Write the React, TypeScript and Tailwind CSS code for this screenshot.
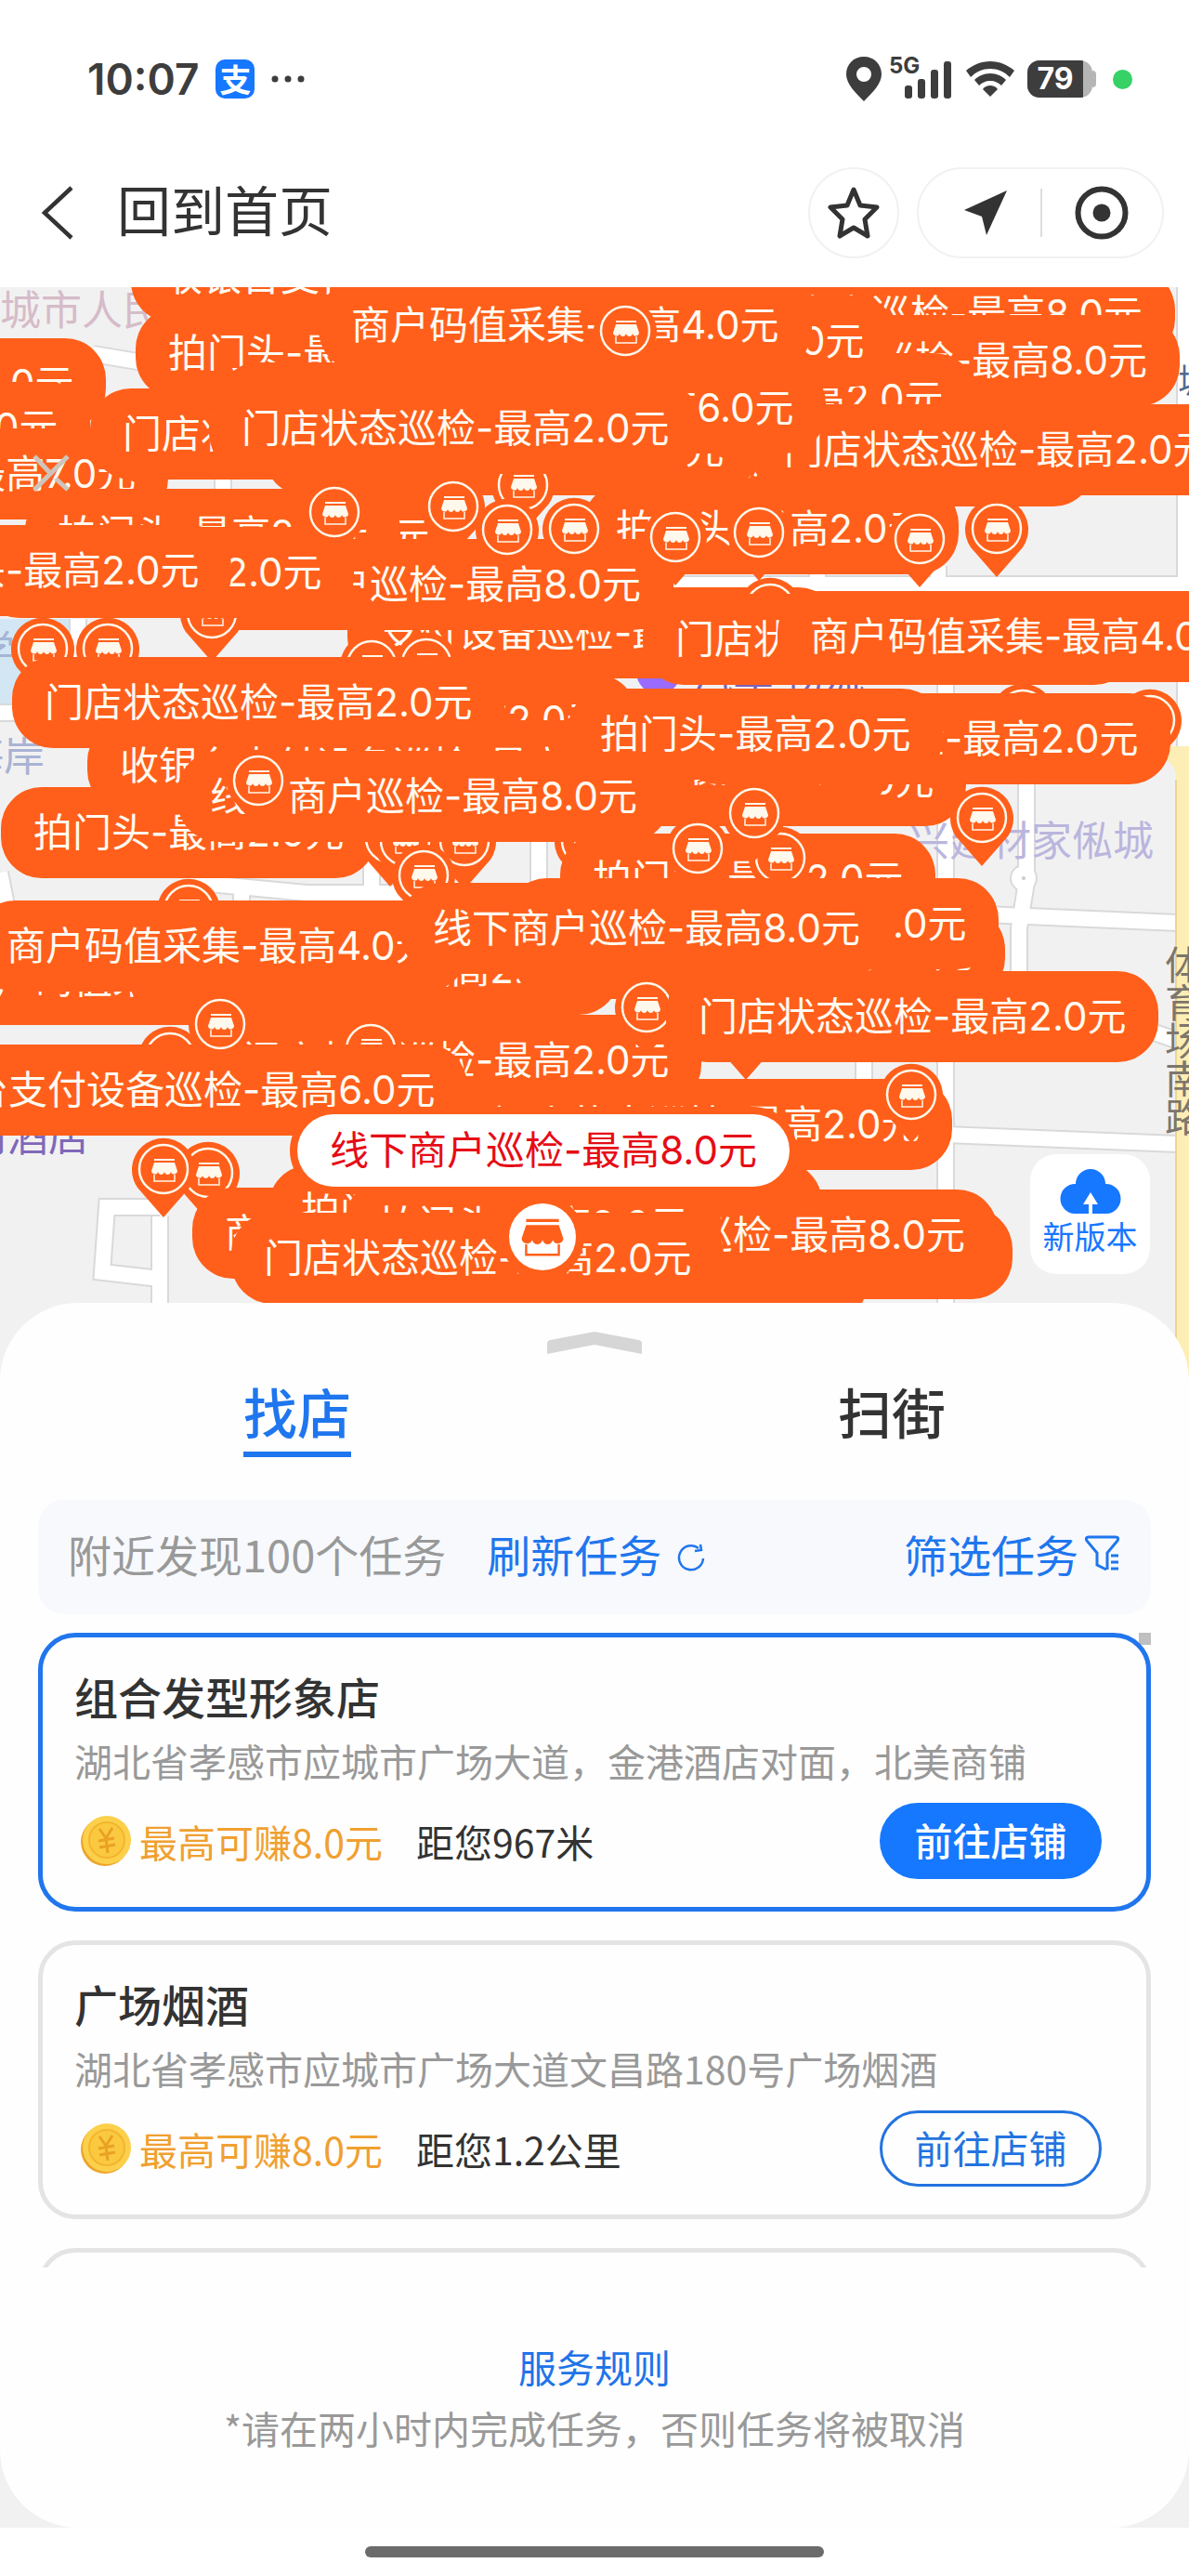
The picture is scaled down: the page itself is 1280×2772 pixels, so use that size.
import React, { useState } from "react";

const INSPECT = "门店状态巡检-最高2.0元";
const OFFLINE = "线下商户巡检-最高8.0元";
const COLLECT = "商户码值采集-最高4.0元";
const FACADE = "拍门头-最高2.0元";
const CASHIER = "收银台支付设备巡检-最高6.0元";
const DEVICE = "支付设备巡检-最高6.0元";

type Marker = { x: number; y: number; text?: string };

// Canvas coordinates: labels use their left edge and middle, pins use the middle of the ring.
// Later entries are drawn over earlier ones.
const markers: Marker[] = [
  { x: 141, y: -11, text: CASHIER },
  { x: 146, y: 71, text: FACADE },
  { x: -416, y: 104, text: INSPECT },
  { x: -433, y: 151, text: INSPECT },
  { x: 735, y: 29, text: OFFLINE },
  { x: 740, y: 79, text: OFFLINE },
  { x: 520, y: 120, text: INSPECT },
  { x: 435, y: 58, text: INSPECT },
  { x: 343, y: 41, text: COLLECT },
  { x: 673, y: 47 },
  { x: 648, y: 187, text: INSPECT },
  { x: 284, y: 175, text: INSPECT },
  { x: 809, y: 175, text: INSPECT },
  { x: 628, y: 260, text: FACADE },
  { x: 234, y: 130, text: CASHIER },
  { x: -342, y: 201, text: "线下商户巡检-最高7.0元" },
  { x: 97, y: 158, text: INSPECT },
  { x: 93, y: 268, text: FACADE },
  { x: 563, y: 213 },
  { x: 225, y: 152, text: INSPECT },
  { x: 27, y: 266, text: FACADE },
  { x: 374, y: 372, text: DEVICE },
  { x: 195, y: 320, text: OFFLINE },
  { x: 228, y: 351 },
  { x: -23, y: 307, text: FACADE },
  { x: -155, y: 305, text: FACADE },
  { x: 360, y: 242 },
  { x: 488, y: 236 },
  { x: 546, y: 261 },
  { x: 618, y: 260 },
  { x: 727, y: 269 },
  { x: 817, y: 264 },
  { x: 990, y: 271 },
  { x: 1073, y: 260 },
  { x: 829, y: 346 },
  { x: 692, y: 379, text: INSPECT },
  { x: 837, y: 376, text: COLLECT },
  { x: 46, y: 389 },
  { x: 116, y: 389 },
  { x: 400, y: 407 },
  { x: 459, y: 405 },
  { x: 282, y: 466, text: FACADE },
  { x: 13, y: 447, text: INSPECT },
  { x: 510, y: 531, text: INSPECT },
  { x: 425, y: 517, text: INSPECT },
  { x: 94, y: 515, text: CASHIER },
  { x: 1, y: 587, text: FACADE },
  { x: 420, y: 593 },
  { x: 500, y: 596 },
  { x: 436, y: 596 },
  { x: 631, y: 596 },
  { x: 191, y: 548, text: OFFLINE },
  { x: 278, y: 531 },
  { x: 1101, y: 460 },
  { x: 1238, y: 466 },
  { x: 730, y: 486, text: INSPECT },
  { x: 611, y: 481, text: FACADE },
  { x: 603, y: 637, text: FACADE },
  { x: 840, y: 614 },
  { x: 751, y: 604 },
  { x: 812, y: 566 },
  { x: 1057, y: 571 },
  { x: 456, y: 633 },
  { x: 203, y: 670 },
  { x: -82, y: 745, text: COLLECT },
  { x: 137, y: 734, text: INSPECT },
  { x: 552, y: 717, text: OFFLINE },
  { x: 545, y: 685, text: INSPECT },
  { x: -28, y: 709, text: COLLECT },
  { x: 431, y: 690, text: OFFLINE },
  { x: 225, y: 832, text: INSPECT },
  { x: 183, y: 829 },
  { x: 399, y: 820 },
  { x: -152, y: 864, text: CASHIER },
  { x: 237, y: 793 },
  { x: 696, y: 775 },
  { x: 803, y: 801 },
  { x: 495, y: 901, text: INSPECT },
  { x: 717, y: 785, text: INSPECT },
  { x: 981, y: 869 },
  { x: 224, y: 953 },
  { x: 176, y: 949 },
  { x: 207, y: 1018, text: COLLECT },
  { x: 355, y: 990, text: OFFLINE },
  { x: 404, y: 1066, text: OFFLINE },
  { x: 560, y: 1040, text: OFFLINE },
  { x: 544, y: 1020, text: OFFLINE },
  { x: 289, y: 994, text: FACADE },
  { x: 372, y: 1009, text: FACADE },
  { x: 249, y: 1045, text: INSPECT },
];

const shops = [
  {
    name: "组合发型形象店",
    address: "湖北省孝感市应城市广场大道，金港酒店对面，北美商铺",
    reward: "最高可赚8.0元",
    distance: "距您967米",
  },
  {
    name: "广场烟酒",
    address: "湖北省孝感市应城市广场大道文昌路180号广场烟酒",
    reward: "最高可赚8.0元",
    distance: "距您1.2公里",
  },
];

const StoreGlyph = () => (
  <>
    <path d="M-11 -12H11V-10H-11Z" fill="currentColor" />
    <path
      d="M-11 -8H11L14 1C14 5 8 6 7 2C6 6 1 6 0 2C-1 6 -6 6 -7 2C-8 6 -14 5 -14 1Z"
      fill="currentColor"
    />
    <path d="M-11 5V12H11V5" fill="none" stroke="currentColor" strokeWidth="1.5" />
  </>
);

const Pin = ({ x, y }: { x: number; y: number }) => (
  <svg
    className="absolute h-[88px] w-[70px] text-[#fff8ec]"
    style={{ left: x - 35, top: y - 35 }}
    viewBox="-35 -35 70 88"
  >
    <path d="M0 52L-28 20A34 34 0 1 1 28 20Z" fill="#ff5f1a" />
    <circle r="26" fill="none" stroke="currentColor" strokeWidth="2.5" />
    <g transform="translate(1 1)">
      <StoreGlyph />
    </g>
  </svg>
);

const MapBase = () => (
  <svg className="absolute left-0 top-0 h-[1180px] w-[1280px]" viewBox="0 0 1280 1180">
    <path d="M0 357H78V448H0Z" fill="#d3e6f3" />
    <g fill="none" stroke="#d9d9db" strokeWidth="20">
      <path d="M0 458H200M84 357V440M0 630L14 700M100 72L160 82" />
      <path d="M203 640L330 652H460M260 650V700M400 600V690M580 560V640" />
      <path d="M880 300V340M1010 300V340M1276 0V500M700 320H1276" />
      <path d="M1018 420V1180M1105 530V640L1097 690V800" />
      <path d="M1060 675L1268 684M1180 780L1280 815M1018 912L1268 922M930 800V860" />
      <path d="M172 1000V1180M172 990H115L110 1060L172 1067" />
      <path d="M240 170V220M560 920H760" />
    </g>
    <circle cx="1102" cy="636" r="15" fill="#d9d9db" />
    <g fill="none" stroke="#fff" strokeWidth="16">
      <path d="M0 458H200M84 357V440M0 630L14 700M100 72L160 82" />
      <path d="M203 640L330 652H460M260 650V700M400 600V690M580 560V640" />
      <path d="M880 300V340M1010 300V340M1276 0V500M700 320H1276" />
      <path d="M1018 420V1180M1105 530V640L1097 690V800" />
      <path d="M1060 675L1268 684M1180 780L1280 815M1018 912L1268 922M930 800V860" />
      <path d="M172 1000V1180M172 990H115L110 1060L172 1067" />
      <path d="M240 170V220" />
    </g>
    <circle cx="1102" cy="636" r="13" fill="#fff" />
    <circle cx="1102" cy="636" r="2" fill="#c9c9cc" />
    <path d="M1258 494H1280V1180H1266V530Q1266 512 1250 506Z" fill="#fdeeb5" />
    <path d="M1266 530V1180" stroke="#eed58f" strokeWidth="2" />
    <circle cx="709" cy="414" r="24" fill="#9b6bff" />
  </svg>
);

const MapLabels = () => (
  <div className="whitespace-nowrap text-[44px] leading-[44px]">
    <span className="absolute left-0 top-0 text-[#d5bcc8]">城市人民</span>
    <span className="absolute -left-[28px] top-[366px] text-[#a5b5d6]">学</span>
    <span className="absolute -left-[40px] top-[480px] text-[#a9b3d3]">海岸</span>
    <span className="absolute left-[978px] top-[571px] text-[#bab6dd]">兴建材家俬城</span>
    <span className="absolute left-[1268px] top-[76px] text-[36px] text-[#4f6b90]">城</span>
    <span className="absolute -left-[36px] top-[889px] text-[#7f68b8]">河酒店</span>
    <span className="absolute left-[745px] top-[394px] text-[#7d62b5]">汽车 物流</span>
    <span className="absolute left-[1254px] top-[706px] flex w-[44px] flex-col text-[42px] leading-[41px] text-[#7d766c]">
      {"体育场南路".split("").map((c) => (
        <span key={c}>{c}</span>
      ))}
    </span>
  </div>
);

const TaskMap = () => (
  <section
    aria-label="任务地图"
    className="relative h-[1180px] w-full overflow-hidden bg-[#f2f1f2]"
  >
    <MapBase />
    <MapLabels />
    {markers.map((m, i) =>
      m.text ? (
        <button
          key={i}
          type="button"
          className="absolute h-[98px] -translate-y-1/2 whitespace-nowrap rounded-[44px] bg-[#ff5f1a] px-[35px] font-[Inter,'Noto_Sans_CJK_SC',sans-serif] text-[42px] leading-[60px] text-[#fffaf2]"
          style={{ left: m.x, top: m.y }}
        >
          {m.text}
        </button>
      ) : (
        <Pin key={i} x={m.x} y={m.y} />
      ),
    )}

    {/* close mark left over the labels */}
    <svg className="absolute left-[34px] top-[180px] h-[40px] w-[42px]" viewBox="0 0 42 40">
      <path d="M3 2L20 20M26 26L39 38M39 2L3 38" stroke="#cfc4bb" strokeWidth="5" />
    </svg>

    {/* selected shop */}
    <svg
      className="absolute left-[539px] top-[977px] h-[116px] w-[90px] text-[#ff5f1a]"
      viewBox="-45 -45 90 116"
    >
      <path d="M0 70L-37 26A45 45 0 1 1 37 26Z" fill="currentColor" />
      <circle r="36" fill="#fff" />
      <g transform="scale(1.6)">
        <StoreGlyph />
      </g>
    </svg>
    <button
      type="button"
      className="absolute left-[320px] top-[890px] h-[78px] whitespace-nowrap rounded-full bg-white px-[35px] font-[Inter,'Noto_Sans_CJK_SC',sans-serif] text-[42px] leading-[60px] text-[#e60c16] ring-8 ring-[#ff5f1a]"
    >
      {OFFLINE}
    </button>

    <button
      type="button"
      className="absolute right-[42px] top-[933px] flex h-[129px] w-[129px] flex-col items-center rounded-[28px] bg-white pt-3 text-[34px] leading-[44px] text-[#1677ff]"
    >
      <svg className="h-[54px] w-[66px] shrink-0" viewBox="0 0 66 54">
        <path
          d="M16 52A16 16 0 1 1 17 20A16 16 0 1 1 49 20A16 16 0 1 1 50 52Z"
          fill="currentColor"
        />
        <path d="M33 29L41 42H35V54H31V42H25Z" fill="#fff" />
      </svg>
      新版本
    </button>
  </section>
);

const StatusBar = () => (
  <div className="flex h-[170px] items-center justify-between pl-[94px] pr-[61px] text-[#3d3d3d]">
    <div className="flex items-center gap-[18px]">
      <span className="font-[Inter,sans-serif] text-[46px] font-semibold leading-[56px]">
        10:07
      </span>
      <span className="flex h-[42px] w-[42px] items-center justify-center rounded-[10px] bg-[#1677ff] text-[34px] font-bold leading-[36px] text-white">
        支
      </span>
      <svg className="h-[8px] w-[36px]" viewBox="0 0 36 8" fill="currentColor">
        <circle cx="4" cy="4" r="3.5" />
        <circle cx="18" cy="4" r="3.5" />
        <circle cx="32" cy="4" r="3.5" />
      </svg>
    </div>
    <div className="flex items-center">
      <svg className="h-[48px] w-[38px]" viewBox="0 0 38 48" fill="currentColor">
        <path
          fillRule="evenodd"
          d="M19 0C30 0 38 8 38 19C38 29 28 39 19 48C10 39 0 29 0 19C0 8 8 0 19 0ZM19 11A8 8 0 1 0 19 27A8 8 0 1 0 19 11Z"
        />
      </svg>
      <svg className="ml-2 h-[48px] w-[67px]" viewBox="0 0 67 48" fill="currentColor">
        <text x="0" y="18" fontFamily="Inter" fontWeight="700" fontSize="24">
          5G
        </text>
        <rect x="17" y="31" width="8" height="14" rx="3" />
        <rect x="31" y="24" width="8" height="21" rx="3" />
        <rect x="45" y="14" width="8" height="31" rx="3" />
        <rect x="59" y="5" width="8" height="40" rx="3" />
      </svg>
      <svg className="ml-4 h-[38px] w-[52px]" viewBox="0 0 52 38" fill="currentColor">
        <path d="M26 0C36 0 45 4 52 10L47 17C41 11 34 8 26 8S11 11 5 17L0 10C7 4 16 0 26 0Z" />
        <path d="M26 13C33 13 39 16 43 20L38 26C35 23 31 21 26 21S17 23 14 26L9 20C13 16 19 13 26 13Z" />
        <path d="M26 26C29 26 32 27 34 30L26 38L18 30C20 27 23 26 26 26Z" />
      </svg>
      <div className="ml-[14px] flex items-center">
        <span className="flex h-[40px] w-[70px] overflow-hidden rounded-[13px] bg-[#b5b5b5]">
          <span className="flex h-full w-[60px] items-center justify-center bg-[#3d3d3d] font-[Inter,sans-serif] text-[32px] font-bold leading-[40px] text-white">
            79
          </span>
        </span>
        <span className="h-[18px] w-[4px] rounded-r-full bg-[#b5b5b5]" />
      </div>
      <span className="ml-[18px] h-[21px] w-[21px] rounded-full bg-[#36d167]" />
    </div>
  </div>
);

const NavBar = () => (
  <header className="flex h-[139px] items-start pl-[44px] pr-[27px] pt-[10px] text-[#333]">
    <div className="flex h-[98px] flex-1 items-center gap-[46px]">
      <button type="button" aria-label="返回">
        <svg className="h-[58px] w-[36px]" viewBox="0 0 36 58" fill="none">
          <path d="M33 2L4 29L33 56" stroke="currentColor" strokeWidth="4.5" />
        </svg>
      </button>
      <h1 className="pb-2.5 text-[58px] leading-[80px]">回到首页</h1>
    </div>
    <button
      type="button"
      aria-label="收藏"
      className="flex h-[98px] w-[98px] items-center justify-center rounded-full border-2 border-[#f1f1f1]"
    >
      <svg className="h-[58px] w-[56px]" viewBox="0 0 56 58" fill="none">
        <path
          d="M28 4L35 21L53 23L40 36L43 54L28 45L13 54L16 36L3 23L21 21Z"
          stroke="currentColor"
          strokeWidth="5"
          strokeLinejoin="round"
        />
      </svg>
    </button>
    <div className="ml-[19px] flex h-[98px] w-[266px] items-center justify-between rounded-full border-2 border-[#f1f1f1] pl-[48px] pr-[36px]">
      <button type="button" aria-label="分享">
        <svg className="h-[48px] w-[48px]" viewBox="0 0 48 48" fill="currentColor">
          <path d="M47 0L25 48L20 28L1 21Z" />
        </svg>
      </button>
      <span className="h-[52px] w-[2px] bg-[#ddd]" />
      <button type="button" aria-label="关闭">
        <svg className="h-[58px] w-[58px]" viewBox="0 0 58 58">
          <circle cx="29" cy="29" r="25.5" fill="none" stroke="currentColor" strokeWidth="6" />
          <circle cx="29" cy="29" r="9.5" fill="currentColor" />
        </svg>
      </button>
    </div>
  </header>
);

const Coin = () => (
  <svg className="h-[56px] w-[56px]" viewBox="0 0 56 56">
    <circle cx="27" cy="29" r="26" fill="#eda52c" />
    <circle cx="29" cy="27" r="26" fill="#fcd04b" />
    <circle cx="29" cy="27" r="19" fill="#fbc93f" stroke="#f3b52f" strokeWidth="2" />
    <path
      d="M21 15L28 25L35 14M28 25L30 41M20 28L37 25M21 35L38 32"
      fill="none"
      stroke="#e9a126"
      strokeWidth="3"
    />
  </svg>
);

const App = () => {
  const [tab, setTab] = useState("找店");

  return (
    <div className="w-full bg-white font-['Noto_Sans_CJK_SC',sans-serif]">
      <StatusBar />
      <NavBar />
      <div className="bg-[#f2f1f2]">
        <TaskMap />

        <main className="relative -mt-[87px] rounded-[84px] bg-[#fefefe] px-[41px] pt-[30px]">
          <svg className="mx-auto h-[26px] w-[104px]" viewBox="0 0 104 26" fill="#d6d6d6">
            <path d="M1 13Q1 11 4 10L52 1L100 10Q103 11 103 13V25L52 15L1 25Z" />
          </svg>

          <nav className="-mx-[41px] mt-[24px] grid grid-cols-2 justify-items-center">
            {["找店", "扫街"].map((name) => (
              <button
                key={name}
                type="button"
                onClick={() => setTab(name)}
                className={
                  tab === name
                    ? "h-[86px] border-b-[6px] border-[#1f76ee] pb-2 text-[58px] font-medium leading-[72px] text-[#1f76ee]"
                    : "h-[86px] border-b-[6px] border-transparent pb-2 text-[58px] font-medium leading-[72px] text-[#333]"
                }
              >
                {name}
              </button>
            ))}
          </nav>

          <div className="mt-[46px] flex h-[123px] items-center rounded-[28px] bg-[#f7f9fd] pb-2 pl-[32px] pr-[32px] text-[47px] leading-[68px] text-[#1f76ee]">
            <span className="text-[#999]">附近发现100个任务</span>
            <button type="button" className="ml-[44px] flex items-center gap-4">
              刷新任务
              <svg className="mt-2 h-[32px] w-[32px]" viewBox="0 0 32 32" fill="none">
                <path
                  d="M29 17A13 13 0 1 1 24 6M20 9L27 8L26 2"
                  stroke="currentColor"
                  strokeWidth="2.5"
                />
              </svg>
            </button>
            <button type="button" className="ml-auto flex items-center gap-1.5">
              筛选任务
              <svg className="h-[42px] w-[40px]" viewBox="0 0 40 42" fill="none">
                <path
                  d="M24 38L14 33V20L3 7Q1 3 5 3H34Q38 3 36 7L25 20V38"
                  stroke="currentColor"
                  strokeWidth="3"
                />
                <path d="M29 23H37M29 30H37M29 37H37" stroke="currentColor" strokeWidth="3" />
              </svg>
            </button>
          </div>

          <div className="relative mt-[20px] flex h-[683px] flex-col gap-[31px] overflow-hidden">
            <span className="absolute right-0 top-0 h-[13px] w-[13px] bg-[#bfbfbf]" />
            {shops.map((shop, i) => (
              <article
                key={shop.name}
                className={
                  i === 0
                    ? "relative h-[300px] shrink-0 rounded-[40px] border-[5px] border-[#2176ee] pl-[34px] pr-[48px] pt-[35px]"
                    : "relative h-[300px] shrink-0 rounded-[40px] border-[5px] border-[#e4e4e4] pl-[34px] pr-[48px] pt-[35px]"
                }
              >
                <h2 className="text-[47px] font-medium leading-[56px] text-[#333]">{shop.name}</h2>
                <p className="mt-[13px] whitespace-nowrap text-[41px] leading-[56px] text-[#999]">
                  {shop.address}
                </p>
                <div className="mt-[18px] flex items-center text-[41px] leading-[60px] text-[#333]">
                  <span className="flex items-center gap-2 pl-1.5 text-[#f0a030]">
                    <Coin />
                    {shop.reward}
                  </span>
                  <span className="ml-[36px]">{shop.distance}</span>
                  <button
                    type="button"
                    className={
                      i === 0
                        ? "ml-auto h-[82px] w-[239px] rounded-full bg-[#1677ff] pb-1 font-medium text-white"
                        : "ml-auto h-[82px] w-[239px] rounded-full border-[3px] border-[#2373e0] pb-1 text-[#2373e0]"
                    }
                  >
                    前往店铺
                  </button>
                </div>
              </article>
            ))}
            <article className="h-[300px] shrink-0 rounded-[40px] border-[5px] border-[#e4e4e4]" />
          </div>

          <footer className="flex flex-col items-center pb-[78px] pt-[76px] text-[41px] leading-[60px]">
            <a href="#rules" className="text-[#1f74e8]">
              服务规则
            </a>
            <p className="mt-[6px] text-[#999]">*请在两小时内完成任务，否则任务将被取消</p>
          </footer>
        </main>
      </div>
      <div className="flex h-[52px] items-center justify-center">
        <span className="h-[12px] w-[494px] rounded-full bg-[#6b6b6b]" />
      </div>
    </div>
  );
};

export default App;
